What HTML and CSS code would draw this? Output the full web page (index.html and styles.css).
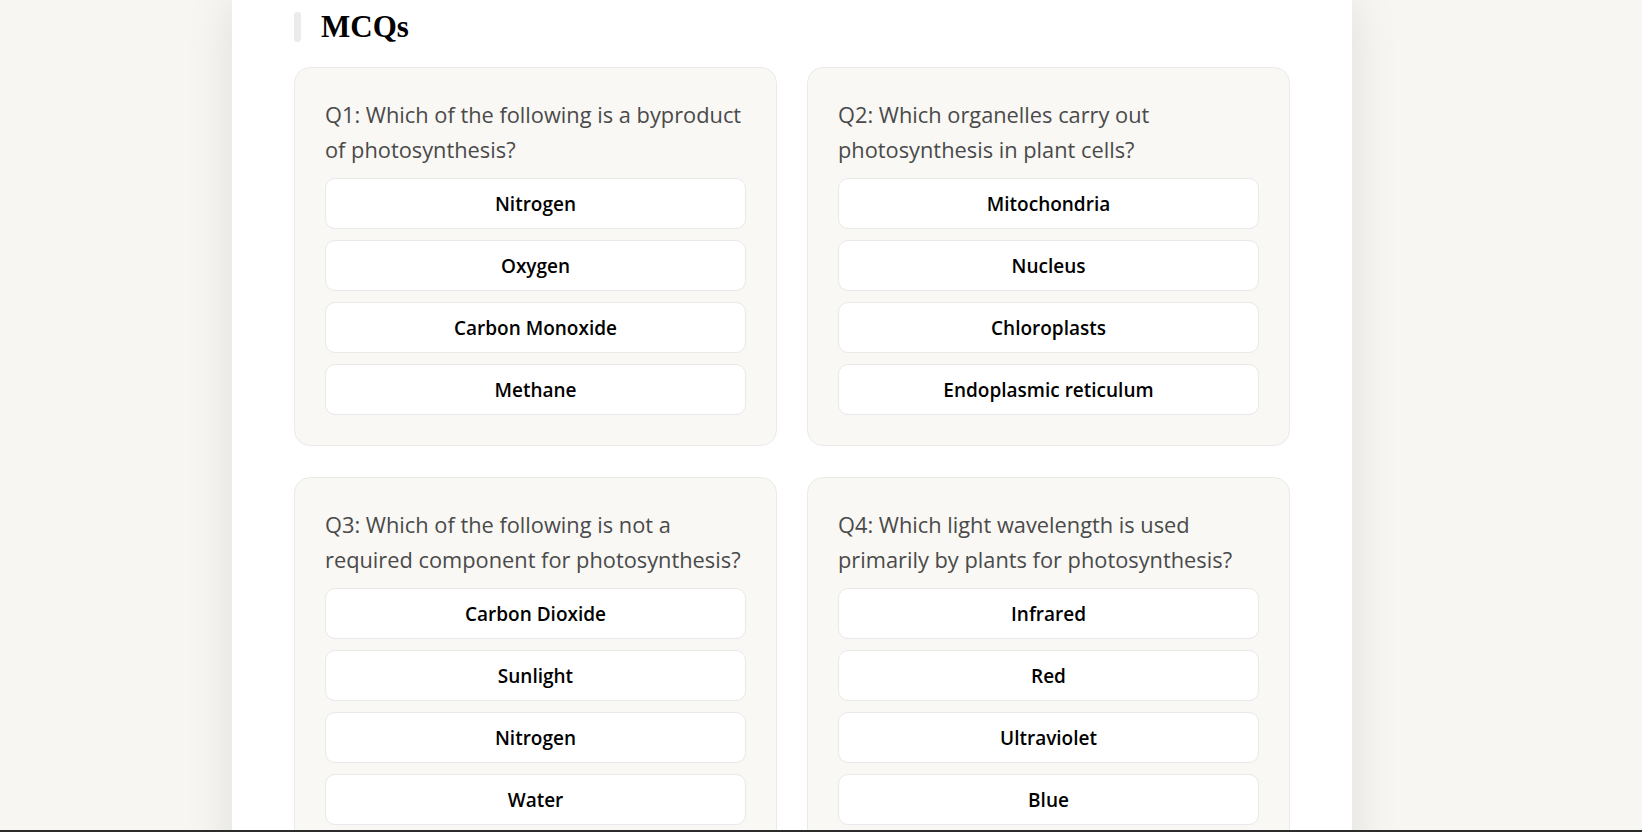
FILE: index.html
```html
<!DOCTYPE html>
<html lang="en">
<head>
<meta charset="utf-8">
<title>MCQs</title>
<link rel="stylesheet" href="styles.css">
</head>
<body>
<div class="page">
  <div class="heading">
    <span class="heading-bar"></span>
    <h2 class="heading-title">MCQs</h2>
  </div>
  <div class="grid">
    <div class="card">
      <h3 class="question">Q1: Which of the following is a byproduct of photosynthesis?</h3>
      <div class="option">Nitrogen</div>
      <div class="option">Oxygen</div>
      <div class="option">Carbon Monoxide</div>
      <div class="option">Methane</div>
    </div>
    <div class="card">
      <h3 class="question">Q2: Which organelles carry out photosynthesis in plant cells?</h3>
      <div class="option">Mitochondria</div>
      <div class="option">Nucleus</div>
      <div class="option">Chloroplasts</div>
      <div class="option">Endoplasmic reticulum</div>
    </div>
    <div class="card">
      <h3 class="question">Q3: Which of the following is not a required component for photosynthesis?</h3>
      <div class="option">Carbon Dioxide</div>
      <div class="option">Sunlight</div>
      <div class="option">Nitrogen</div>
      <div class="option">Water</div>
    </div>
    <div class="card">
      <h3 class="question">Q4: Which light wavelength is used primarily by plants for photosynthesis?</h3>
      <div class="option">Infrared</div>
      <div class="option">Red</div>
      <div class="option">Ultraviolet</div>
      <div class="option">Blue</div>
    </div>
  </div>
</div>
<div class="bottom-bar"></div>
</body>
</html>
```

FILE: styles.css
```css
html, body {
  margin: 0;
  padding: 0;
  height: 100%;
  overflow: hidden;
}
body {
  background: #f7f6f3;
  font-family: "Open Sans", "Noto Sans", sans-serif;
}
.page {
  width: 1120px;
  box-sizing: border-box;
  margin-left: 232px;
  min-height: 100%;
  background: #ffffff;
  padding: 12px 62px 40px;
  box-shadow: 0 0 45px rgba(0, 0, 0, 0.1);
}
.heading {
  display: flex;
  align-items: center;
  gap: 20px;
  height: 30px;
  margin-bottom: 25px;
}
.heading-bar {
  width: 7px;
  height: 30px;
  border-radius: 3px;
  background: #ebebeb;
}
.heading-title {
  margin: 0;
  font-family: "Liberation Serif", "Times New Roman", serif;
  font-weight: bold;
  font-size: 31px;
  line-height: 30px;
  color: #000;
}
.grid {
  display: grid;
  grid-template-columns: 483px 483px;
  column-gap: 30px;
  row-gap: 31px;
}
.card {
  background: #f9f8f5;
  border: 1px solid #ebeae7;
  border-radius: 16px;
  padding: 30px;
}
.question {
  margin: 0 0 11px;
  font-size: 21.8px;
  line-height: 34.5px;
  font-weight: 500;
  color: #4a4a4a;
}
.option {
  background: #ffffff;
  border: 1px solid #e9e9e9;
  border-radius: 10px;
  height: 49px;
  display: flex;
  align-items: center;
  justify-content: center;
  font-size: 19px;
  font-weight: 600;
  color: #000;
  margin-bottom: 11px;
}
.option:last-child {
  margin-bottom: 0;
}
.bottom-bar {
  position: fixed;
  left: 0;
  right: 0;
  bottom: 0;
  height: 2px;
  background: #2b2b2b;
}
```
